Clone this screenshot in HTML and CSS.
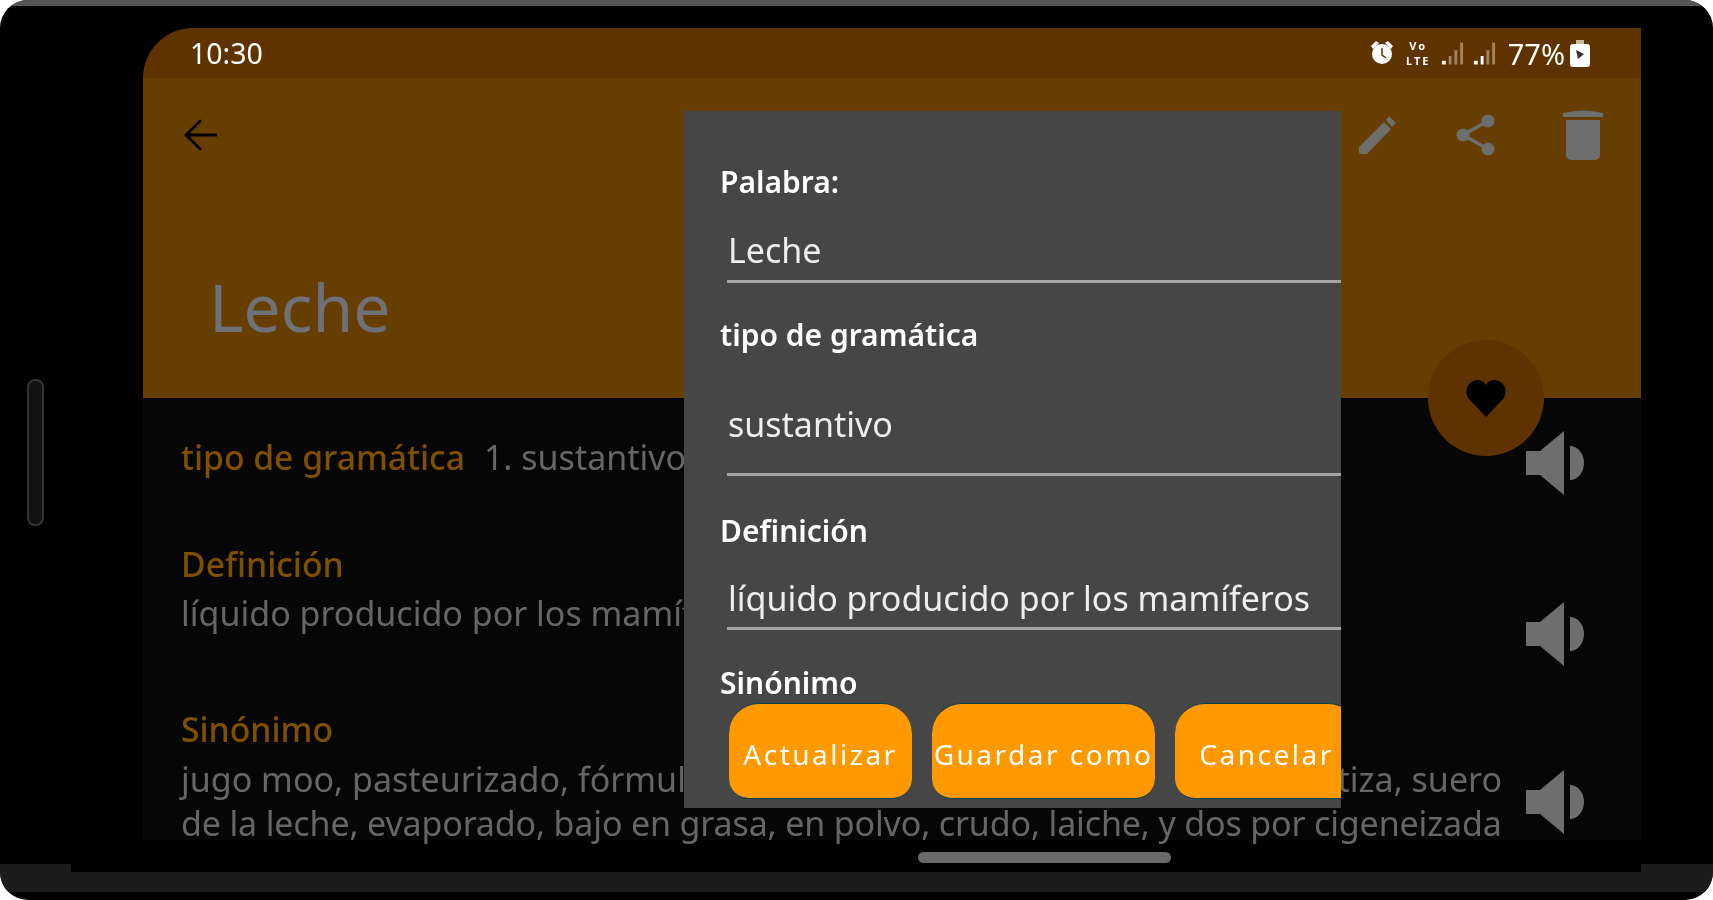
FILE: index.html
```html
<!DOCTYPE html>
<html lang="es">
<head>
    <meta charset="UTF-8">
    <meta name="viewport" content="width=device-width, initial-scale=1.0">
    <title>Leche</title>
    <link rel="stylesheet" href="styles.css">
</head>
<body>
    <div class="device">
        <div class="frame-top"></div>
        <div class="side-button"></div>

        <div class="screen">
            <div class="status-bar">
                <span class="time">10:30</span>
                <div class="status-icons">
                    <svg class="st-alarm" viewBox="0 0 24 26"><path d="M1 6l5-5 3 2-6 6zM23 6l-5-5-3 2 6 6z"/><circle cx="12" cy="14" r="10"/><path d="M12 8v7l4 3" fill="none" stroke="#5e3300" stroke-width="1.5"/></svg>
                    <div class="volte">Vo<br>LTE</div>
                    <svg class="st-signal" viewBox="0 0 24 26"><path d="M1 21h4v4H1z" fill="#fff"/><path d="M8 16h3v9H8zM14 10h3v15h-3zM20 2h3v23h-3z" fill="#a08560"/></svg>
                    <svg class="st-signal" viewBox="0 0 24 26"><path d="M1 21h4v4H1zM8 16h3v9H8z" fill="#fff"/><path d="M14 10h3v15h-3zM20 2h3v23h-3z" fill="#a08560"/></svg>
                    <span class="battery-text">77%</span>
                    <svg class="st-battery" viewBox="0 0 20 27"><path d="M6 0h8v4H6z" fill="#c9b9a0"/><rect x="0" y="4" width="20" height="23" rx="3" fill="#fff"/><path d="M6 10l8 4-6 5z" fill="#333"/></svg>
                </div>
            </div>

            <header class="app-bar">
                <div class="toolbar">
                    <svg class="icon-back" viewBox="0 0 32 32"><path d="M31 16H3M16 2L2 16l14 14" fill="none" stroke="#000" stroke-width="2.6"/></svg>
                    <div class="actions">
                        <svg class="icon-edit" viewBox="0 0 38 40"><path d="M1 32L26 7l7 7L9 39H3a2 2 0 0 1-2-2zM28 5l3-4 7 7-4 4z"/></svg>
                        <svg class="icon-share" viewBox="0 0 39 42"><circle cx="32" cy="7" r="6.500"/><circle cx="7" cy="21" r="6.500"/><circle cx="32" cy="35" r="6.500"/><path d="M7 21L32 7M7 21l25 14" fill="none" stroke="#6e6e6e" stroke-width="3.5"/></svg>
                        <svg class="icon-trash" viewBox="0 0 40 50"><path d="M0 3q20-5 40 0v4H0zM3 10h34v35a5 5 0 0 1-5 5H8a5 5 0 0 1-5-5z"/></svg>
                    </div>
                </div>
                <h1 class="title">Leche</h1>
            </header>

            <main class="content">
                <section class="row">
                    <div class="row-text row-inline">
                        <span class="row-label">tipo de gramática</span>
                        <span class="row-body">1. sustantivo</span>
                    </div>
                    <svg class="speaker" viewBox="0 0 58 64"><path d="M0 20h14L38 0v64L14 44H0z"/><path d="M44 15a14 17 0 0 1 0 34z"/></svg>
                </section>
                <section class="row row-tall row-def">
                    <div class="row-text">
                        <div class="row-label">Definición</div>
                        <div class="row-body">líquido producido por los mamíferos</div>
                    </div>
                    <svg class="speaker" viewBox="0 0 58 64"><path d="M0 20h14L38 0v64L14 44H0z"/><path d="M44 15a14 17 0 0 1 0 34z"/></svg>
                </section>
                <section class="row row-tall row-syn">
                    <div class="row-text">
                        <div class="row-label">Sinónimo</div>
                        <div class="row-body row-split"><span>jugo moo, pasteurizado, fórmula</span><span>tiza, suero</span></div>
                        <div class="row-body row-long">de la leche, evaporado, bajo en grasa, en polvo, crudo, laiche, y dos por cigeneizada</div>
                    </div>
                    <svg class="speaker" viewBox="0 0 58 64"><path d="M0 20h14L38 0v64L14 44H0z"/><path d="M44 15a14 17 0 0 1 0 34z"/></svg>
                </section>
            </main>

            <button class="fab">
                <svg viewBox="0 0 24 22"><path d="M12 22L2 11.500C-2 6 2 0 7 0c2 0 4 1 5 3 1-2 3-3 5-3 5 0 9 6 5 11.500z"/></svg>
            </button>

            <div class="dialog">
                <div class="dlg-label">Palabra:</div>
                <div class="dlg-input">Leche</div>
                <div class="dlg-label">tipo de gramática</div>
                <div class="dlg-input dlg-input-big">sustantivo</div>
                <div class="dlg-label">Definición</div>
                <div class="dlg-input dlg-input-def">líquido producido por los mamíferos</div>
                <div class="dlg-label">Sinónimo</div>
                <div class="dlg-buttons">
                    <button class="btn btn-update">Actualizar</button>
                    <button class="btn btn-save">Guardar como</button>
                    <button class="btn btn-cancel">Cancelar</button>
                </div>
            </div>
        </div>

        <div class="home-pill"></div>
        <div class="frame-bottom"></div>
    </div>
</body>
</html>
```

FILE: styles.css
```css
body {
    margin: 0;
    background-color: #fff;
    font-family: "Noto Sans", "Open Sans", sans-serif;
    overflow: hidden;
}

.device {
    position: relative;
    height: 900px;
    background-color: #000;
    border-radius: 28px;
    overflow: hidden;
    display: flex;
    flex-direction: column;
    filter: blur(0.5px);
}

.frame-top {
    height: 6px;
    background-color: #555;
}

.side-button {
    position: absolute;
    left: 27px;
    top: 379px;
    width: 13px;
    height: 143px;
    border: 2px solid #333;
    border-radius: 8px;
    background-color: #111;
}

.screen {
    position: relative;
    margin: 22px 72px 0 143px;
    height: 820px;
    display: flex;
    flex-direction: column;
    border-top-left-radius: 50px;
    overflow: hidden;
}

/* status bar */
.status-bar {
    height: 50px;
    flex-shrink: 0;
    display: flex;
    align-items: center;
    justify-content: space-between;
    padding: 0 51px 0 47px;
    background-color: #5e3300;
    color: #fff;
    font-size: 28.5px;
}

.status-icons {
    display: flex;
    align-items: center;
}

.status-icons svg {
    display: block;
    fill: #fff;
}

.st-alarm {
    width: 24px;
    height: 26px;
}

.volte {
    width: 31px;
    margin: 0 7px 0 9px;
    font-size: 11px;
    font-weight: 700;
    letter-spacing: 2px;
    line-height: 15px;
    text-align: center;
}

.st-signal {
    width: 23px;
    height: 26px;
    margin-right: 9px;
}

.battery-text {
    margin: 0 5px 0 3px;
    font-size: 29px;
}

.st-battery {
    width: 20px;
    height: 27px;
}

/* app bar */
.app-bar {
    height: 320px;
    flex-shrink: 0;
    background-color: #653e00;
}

.toolbar {
    height: 114px;
    display: flex;
    align-items: center;
    padding: 0 38px 0 41px;
}

.icon-back {
    width: 34px;
    height: 34px;
}

.actions {
    margin-left: auto;
    display: flex;
    align-items: center;
    gap: 60px;
    fill: #6e6e6e;
}

.icon-edit {
    width: 38px;
    height: 40px;
}

.icon-share {
    width: 39px;
    height: 42px;
}

.icon-trash {
    width: 40px;
    height: 50px;
    margin-left: 8px;
}

.title {
    margin: 69px 0 0 66px;
    font-size: 66px;
    line-height: 90px;
    font-weight: 400;
    color: #6e7178;
}

/* word details */
.content {
    flex: 1;
    padding: 33px 56px 0 38px;
    overflow: hidden;
    background: linear-gradient(#060606 calc(100% - 8px), #000 calc(100% - 8px));
}

.row {
    display: grid;
    grid-template-columns: 1321px 58px;
    column-gap: 24px;
}

.row-def {
    margin-top: 45px;
}

.row-syn {
    margin-top: 39px;
}

.row-tall .speaker {
    margin-top: 62px;
}

.row-syn .speaker {
    margin-top: 65px;
}

.row-text {
    min-width: 0;
    white-space: nowrap;
}

.row-inline {
    display: flex;
    align-items: center;
    gap: 19px;
    height: 52px;
}

.row-label {
    font-size: 33.7px;
    line-height: 48px;
    font-weight: 500;
    color: #7f4f00;
}

.row-body {
    font-size: 34px;
    line-height: 44px;
    color: #666;
}

.row-def .row-body {
    line-height: 50px;
}

.row-syn .row-label {
    margin-bottom: 4px;
}

.row-split {
    display: flex;
    justify-content: space-between;
}

.row-long {
    letter-spacing: -0.15px;
}

.speaker {
    width: 58px;
    height: 64px;
    fill: #6e6e6e;
}

.fab {
    position: absolute;
    left: 1285px;
    top: 312px;
    width: 116px;
    height: 116px;
    padding: 0;
    border: none;
    border-radius: 50%;
    background-color: #5e3300;
    display: flex;
    align-items: center;
    justify-content: center;
}

.fab svg {
    width: 42px;
    height: 37px;
    fill: #000;
}

/* edit dialog */
.dialog {
    position: absolute;
    left: 541px;
    top: 83px;
    box-sizing: border-box;
    width: 657px;
    height: 697px;
    padding: 51px 0 0 36px;
    background-color: #464646;
    overflow: hidden;
    color: #fff;
}

.dlg-label {
    font-size: 30px;
    line-height: 40px;
    font-weight: 600;
}

.dlg-input {
    margin: 18px 0 32px 7px;
    padding-left: 1px;
    border-bottom: 3px solid #a5a5a5;
    font-size: 34px;
    line-height: 60px;
    color: #eee;
    white-space: nowrap;
}

.dlg-input-big {
    margin-top: 39px;
    padding-bottom: 19px;
    margin-bottom: 35px;
}

.dlg-input-def {
    margin-top: 18px;
    margin-bottom: 33px;
    line-height: 58px;
}

.dlg-buttons {
    margin: 0 0 0 9px;
    display: flex;
    gap: 20px;
}

.btn {
    flex-shrink: 0;
    height: 96px;
    padding: 6px 0 0;
    border: none;
    border-top: 1px solid #0f4050;
    border-bottom: 1px solid #0f4050;
    border-radius: 30px 30px 20px 20px;
    background-color: #ff9900;
    color: #fff;
    font-family: inherit;
    font-size: 28px;
    letter-spacing: 2.5px;
}

.btn-update {
    width: 183px;
}

.btn-save {
    width: 223px;
}

.btn-cancel {
    width: 183px;
}

/* frame bottom */
.home-pill {
    width: 253px;
    height: 11px;
    margin: 4px 0 0 918px;
    border-radius: 6px;
    background-color: #6a6a6a;
}

.frame-bottom {
    position: relative;
    height: 20px;
    margin-top: 9px;
    background-color: #1c1c1c;
}

.frame-bottom::before,
.frame-bottom::after {
    content: "";
    position: absolute;
    top: -8px;
    height: 8px;
    background-color: #1c1c1c;
}

.frame-bottom::before {
    left: 0;
    width: 71px;
}

.frame-bottom::after {
    right: 0;
    width: 72px;
}
```
